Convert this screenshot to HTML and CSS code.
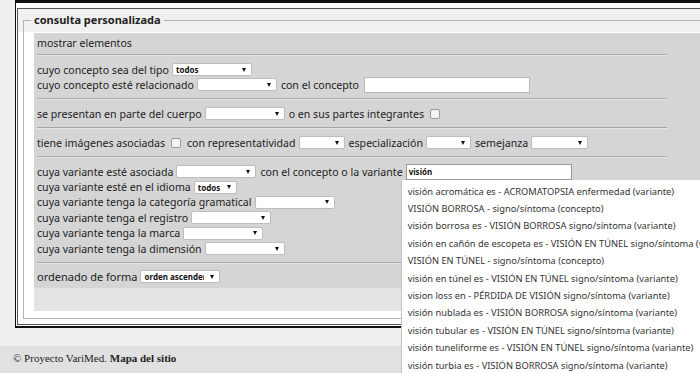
FILE: index.html
```html
<!DOCTYPE html>
<html>
<head lang="es">
    <meta charset="UTF-8">
    <title>consulta personalizada</title>
    <link rel="stylesheet" href="styles.css">
</head>
<body>
    <!--marco exterior-->
    <div class="frame">
        <div class="inner">
            <fieldset class="query">
                <legend>consulta personalizada</legend>
                <div class="panel">
                    <div class="sec head">mostrar elementos</div>

                    <div class="sec">
                        <div class="row">cuyo concepto sea del tipo <span class="sel w80"><b>todos</b></span></div>
                        <div class="row">cuyo concepto esté relacionado <span class="sel w80"></span> con el concepto <span class="txt"></span></div>
                    </div>

                    <div class="sec">
                        <div class="row">se presentan en parte del cuerpo <span class="sel w80"></span> o en sus partes integrantes <span class="chk"></span></div>
                    </div>

                    <div class="sec">
                        <div class="row">tiene imágenes asociadas <span class="chk"></span> con representatividad <span class="sel w46"></span> especialización <span class="sel w45"></span> semejanza <span class="sel w57"></span></div>
                    </div>

                    <div class="sec vars">
                        <div class="row">cuya variante esté asociada <span class="sel w80"></span> con el concepto o la variante
                            <span class="combo">
                                <span class="txt"><b>visión</b></span>
                                <!--lista de sugerencias-->
                                <ul class="suggest">
                                    <li>visión acromática es - ACROMATOPSIA enfermedad (variante)</li>
                                    <li>VISIÓN BORROSA - signo/síntoma (concepto)</li>
                                    <li>visión borrosa es - VISIÓN BORROSA signo/síntoma (variante)</li>
                                    <li>visión en cañón de escopeta es - VISIÓN EN TÚNEL signo/síntoma (variante)</li>
                                    <li>VISIÓN EN TÚNEL - signo/síntoma (concepto)</li>
                                    <li>visión en túnel es - VISIÓN EN TÚNEL signo/síntoma (variante)</li>
                                    <li>vision loss en - PÉRDIDA DE VISIÓN signo/síntoma (variante)</li>
                                    <li>visión nublada es - VISIÓN BORROSA signo/síntoma (variante)</li>
                                    <li>visión tubular es - VISIÓN EN TÚNEL signo/síntoma (variante)</li>
                                    <li>visión tuneliforme es - VISIÓN EN TÚNEL signo/síntoma (variante)</li>
                                    <li>visión turbia es - VISIÓN BORROSA signo/síntoma (variante)</li>
                                </ul>
                            </span>
                        </div>
                        <div class="row">cuya variante esté en el idioma <span class="sel w43"><b>todos</b></span></div>
                        <div class="row">cuya variante tenga la categoría gramatical <span class="sel w80"></span></div>
                        <div class="row">cuya variante tenga el registro <span class="sel w80"></span></div>
                        <div class="row">cuya variante tenga la marca <span class="sel w80"></span></div>
                        <div class="row">cuya variante tenga la dimensión <span class="sel w80"></span></div>
                    </div>

                    <div class="sec last">
                        <div class="row big">ordenado de forma <span class="sel w80"><b>orden ascendente</b></span></div>
                    </div>
                </div>
                <div class="panel-foot"></div>
            </fieldset>
        </div>
    </div>

    <div class="footer">© Proyecto VariMed. <b>Mapa del sitio</b></div>
</body>
</html>
```

FILE: styles.css
```css
* {
    padding: 0;
    margin: 0;
    list-style: none;
}

html, body {
    overflow: hidden;
}

body {
    background: #efefef;
    font-family: "Noto Sans", "Open Sans", sans-serif;
    font-size: 10.6px;
    color: #222;
    height: 373px;
}

.frame {
    margin-left: 15px;
    width: 760px;
    border: 1px solid #111;
    border-top-width: 3px;
    border-bottom-width: 2px;
    background: #fff;
    padding: 5px 0 1px 1px;
}

.inner {
    border: 1px solid #555;
    border-right: 0;
    padding: 4px 0 5px 5px;
    background: linear-gradient(to bottom, #f0f0f0 0, #f0f0f0 23px, #fff 23px);
}

.query {
    border: 1px solid #b4b4b4;
    border-right: 0;
    padding: 6px 0 7px 10px;
}

.query legend {
    font-weight: bold;
    font-size: 11px;
    line-height: 14px;
    padding: 0 3px;
    margin-left: -3px;
    color: #222;
}

.panel {
    background: #d5d5d5;
    padding-left: 3px;
}

.sec {
    width: 630px;
    padding: 7px 0 6px;
    border-bottom: 1px solid #a6a6a6;
    box-shadow: 0 1px 0 #e6e6e6;
}

.sec.head {
    padding: 3px 0 3px;
    line-height: 15px;
}

.sec.last {
    border-bottom: 0;
    box-shadow: none;
    padding: 6px 0 4px;
}

.row {
    display: flex;
    align-items: center;
    height: 15px;
    white-space: nowrap;
}

.vars .row {
    height: 15.4px;
}

.row.big {
    font-size: 11px;
}

.sel {
    display: flex;
    align-items: center;
    height: 13px;
    background: #fff;
    border: 1px solid #bdbdbd;
    border-radius: 2px;
    margin: 0 4px 0 3px;
    padding: 0 5px 0 3px;
    box-sizing: border-box;
    font-size: 8px;
    overflow: hidden;
}

.sel b {
    flex: 0 1 auto;
    min-width: 0;
    margin-right: 6px;
    font-weight: bold;
    color: #111;
    overflow: hidden;
}

.sel:after {
    content: "";
    flex: none;
    border-left: 2.5px solid transparent;
    border-right: 2.5px solid transparent;
    border-top: 4px solid #111;
    margin-left: auto;
}

.w80 { width: 80px; }
.w46 { width: 46px; }
.w45 { width: 45px; }
.w57 { width: 57px; }
.w43 { width: 43px; }

.txt {
    display: flex;
    align-items: center;
    width: 166px;
    height: 16px;
    box-sizing: border-box;
    background: #fff;
    border: 1px solid #b8b8b8;
    margin-left: 5px;
    padding-left: 2px;
    font-size: 8px;
}

.txt b {
    color: #111;
}

.combo {
    position: relative;
    margin-left: -2px;
}

.combo .txt {
    border-color: #999;
}

.chk {
    width: 8px;
    height: 8px;
    border: 1px solid #999;
    border-radius: 2px;
    background: #f4f4f4;
    margin: 0 6px 0 6px;
}

.suggest {
    position: absolute;
    top: 100%;
    left: 0;
    width: 330px;
    padding-top: 3px;
    background: #fff;
    border-left: 1px solid #c4c4c4;
    z-index: 10;
}

.suggest li {
    height: 17.4px;
    line-height: 17.4px;
    padding-left: 6px;
    font-size: 9.3px;
    color: #333;
    white-space: nowrap;
}

.panel-foot {
    height: 23px;
    background: #e4e4e4;
}

.footer {
    margin-top: 18px;
    height: 40px;
    background: #e1e1e1;
    padding: 6px 0 0 13px;
    box-sizing: border-box;
    font-family: "Liberation Serif", serif;
    font-size: 11px;
    color: #222;
}
```
